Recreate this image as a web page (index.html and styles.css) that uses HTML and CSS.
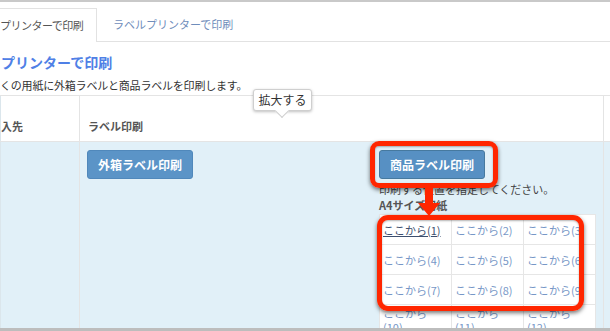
FILE: index.html
```html
<html lang="ja">
<head>
  <meta charset="UTF-8" />
  <title>ラベル印刷</title>
  <link rel="stylesheet" href="styles.css">
</head>
<body>
  <div class="screen">
    <ul class="tabs">
      <li class="tab active">プリンターで印刷</li>
      <li class="tab">ラベルプリンターで印刷</li>
    </ul>

    <h2 class="title">プリンターで印刷</h2>
    <p class="lead">くの用紙に外箱ラベルと商品ラベルを印刷します。</p>

    <table class="orders">
      <thead>
        <tr>
          <th class="col-dest">入先</th>
          <th class="col-label">ラベル印刷</th>
          <th class="col-rest"></th>
        </tr>
      </thead>
      <tbody>
        <tr>
          <td class="col-dest"></td>
          <td class="col-label">
            <div class="label-cell">
              <div class="outer-block">
                <button class="btn">外箱ラベル印刷</button>
              </div>
              <div class="item-block">
                <button class="btn">商品ラベル印刷</button>
                <p class="hint">印刷する位置を指定してください。</p>
                <p class="paper">A4サイズ用紙</p>
                <table class="slots">
                  <tr>
                    <td><a class="current">ここから(1)</a></td>
                    <td><a>ここから(2)</a></td>
                    <td><a>ここから(3)</a></td>
                  </tr>
                  <tr>
                    <td><a>ここから(4)</a></td>
                    <td><a>ここから(5)</a></td>
                    <td><a>ここから(6)</a></td>
                  </tr>
                  <tr>
                    <td><a>ここから(7)</a></td>
                    <td><a>ここから(8)</a></td>
                    <td><a>ここから(9)</a></td>
                  </tr>
                  <tr>
                    <td><a>ここから(10)</a></td>
                    <td><a>ここから(11)</a></td>
                    <td><a>ここから(12)</a></td>
                  </tr>
                </table>
              </div>
            </div>
          </td>
          <td class="col-rest"></td>
        </tr>
      </tbody>
    </table>

    <!-- annotations drawn over the screenshot -->
    <div class="tooltip">拡大する</div>
    <div class="mark mark-button"></div>
    <div class="mark mark-grid"></div>
    <div class="arrow"><div class="arrow-shaft"></div><div class="arrow-head"></div></div>

    <div class="window-edge"></div>
  </div>
</body>
</html>
```

FILE: styles.css
```css
* {
  box-sizing: border-box;
}

body {
  margin: 0;
  padding: 0;
  height: 331px;
  overflow: hidden;
  background: #fff;
  color: #333;
  font-family: "Noto Sans CJK JP", sans-serif;
  border-top: 2px solid #c9c9c9;
}

.screen {
  position: relative;
  height: 329px;
  overflow: hidden;
}

.tabs {
  display: flex;
  list-style: none;
  margin: 6px 0 0;
  padding: 0;
  height: 34px;
  border-bottom: 1px solid #e2e2e2;
}

.tab {
  font-size: 11px;
  line-height: 32px;
  padding: 0 16px;
  color: #6f8dbb;
  white-space: nowrap;
}

.tab.active {
  width: 97px;
  padding: 0;
  letter-spacing: -0.5px;
  color: #555;
  background: #fff;
  border-top: 1px solid #e2e2e2;
  border-right: 1px solid #e2e2e2;
  height: 34px;
}

.title {
  margin: 10px 0 0 1px;
  font-size: 14px;
  line-height: 20px;
  font-weight: bold;
  color: #4f80e6;
  white-space: nowrap;
}

.lead {
  margin: 5px 0 0;
  font-size: 11px;
  line-height: 16px;
  letter-spacing: -0.2px;
  color: #333;
  white-space: nowrap;
}

.orders {
  margin-top: 2px;
  width: 614px;
  border-collapse: collapse;
  table-layout: fixed;
}

.orders th {
  height: 46px;
  text-align: left;
  font-size: 11px;
  font-weight: bold;
  color: #555;
  padding: 14px 0 0 8px;
  border-top: 1px solid #e4e4e4;
  border-bottom: 1px solid #e4e4e4;
  background: #fff;
}

.orders td {
  height: 190px;
  vertical-align: top;
  background: #e1f0f8;
  padding: 0;
}

.orders .col-dest {
  width: 79px;
  padding-left: 0;
  border-left: 1px solid #dbe6ec;
  border-right: 1px solid #e4e4e4;
}

.orders .col-label {
  width: 524px;
  border-right: 1px solid #e4e4e4;
}

.orders .col-rest {
  width: 11px;
}

.label-cell {
  display: flex;
  padding: 8px 0 0 7px;
}

.outer-block {
  width: 292px;
}

.btn {
  height: 29px;
  padding: 0 10px;
  font-family: "Noto Sans CJK JP", sans-serif;
  font-size: 12px;
  font-weight: bold;
  color: #fff;
  background: #5b94c7;
  border: 1px solid #5088bb;
  border-radius: 3px;
}

.item-block .btn {
  background: #5790c3;
  border-color: #46799f;
}

.hint,
.paper {
  margin: 0;
  font-size: 11px;
  line-height: 16px;
  white-space: nowrap;
}

.hint {
  margin-top: 2px;
  color: #444;
}

.paper {
  color: #555;
  font-weight: bold;
}

.slots {
  margin-top: 1px;
  width: 215px;
  border-collapse: collapse;
  table-layout: fixed;
}

.slots td {
  height: 30px;
  width: 72px;
  padding: 0 5px 0 3px;
  vertical-align: middle;
  background: #fff;
  border: 1px solid #e6e6e6;
  font-size: 11px;
  line-height: 14px;
}

.slots a {
  color: #7797c7;
}

.slots a.current {
  color: #3d4f6e;
  text-decoration: underline;
}

.tooltip {
  position: absolute;
  left: 253px;
  top: 87px;
  width: 59px;
  height: 22px;
  font-size: 12px;
  line-height: 20px;
  text-align: center;
  color: #333;
  background: #fff;
  border: 1px solid #cfcfcf;
  border-radius: 3px;
  box-shadow: 0 1px 3px rgba(0, 0, 0, 0.25);
}

.tooltip::after {
  content: "";
  position: absolute;
  left: 23px;
  bottom: -6px;
  width: 9px;
  height: 9px;
  background: #fff;
  border-right: 1px solid #cfcfcf;
  border-bottom: 1px solid #cfcfcf;
  transform: rotate(45deg);
}

.mark {
  position: absolute;
  border: 5px solid #ff2600;
  box-shadow: 0 2px 4px rgba(0, 0, 0, 0.55), inset 0 1px 2px rgba(0, 0, 0, 0.3);
}

.mark-button {
  left: 370px;
  top: 139px;
  width: 128px;
  height: 47px;
  border-radius: 9px;
}

.mark-grid {
  left: 377px;
  top: 213px;
  width: 207px;
  height: 96px;
  border-radius: 11px;
}

.arrow {
  position: absolute;
  left: 418px;
  top: 181px;
  width: 22px;
  height: 33px;
}

.arrow-shaft {
  margin-left: 7px;
  width: 8px;
  height: 20px;
  background: #ff2600;
}

.arrow-head {
  width: 0;
  height: 0;
  border-left: 11px solid transparent;
  border-right: 11px solid transparent;
  border-top: 13px solid #ff2600;
}

.window-edge {
  position: absolute;
  left: 0;
  right: 0;
  bottom: 0;
  height: 3px;
  background: #bdbdbd;
}
```
